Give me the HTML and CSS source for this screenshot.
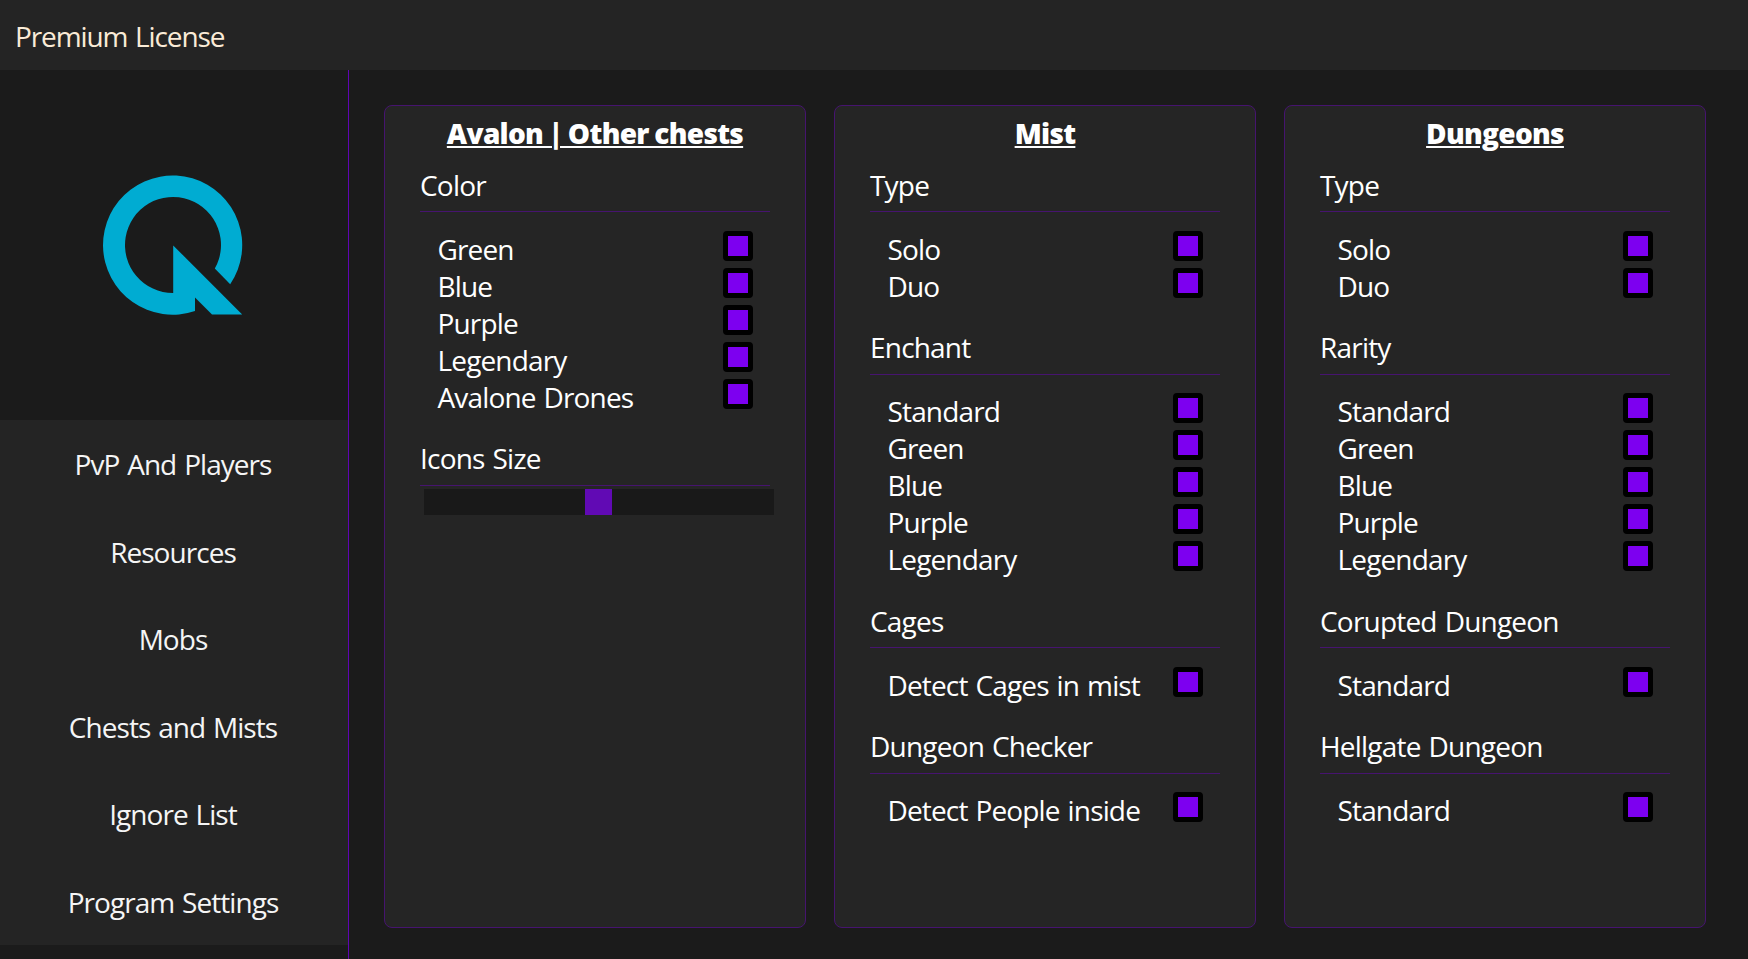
FILE: index.html
```html
<!DOCTYPE html>
<html lang="en">
<head>
    <meta charset="UTF-8">
    <meta name="viewport" content="width=device-width, initial-scale=1.0">
    <title>Chests and Mists</title>
    <link rel="stylesheet" href="styles.css">
</head>
<body>
    <header class="header">Premium License</header>

    <div class="container">
        <aside class="sidebar">
            <div class="logo">
                <svg width="140" height="140" viewBox="0 0 140 140">
                    <path fill="#00acd2" d="M70.2 70.4 L139.2 139.6 H109 L92 122.5 V136 A69.6 69.6 0 1 1 127.2 109.2 L111.8 93.6 A48 48 0 1 0 70.2 118 Z"/>
                </svg>
            </div>
            <nav class="menu">
                <a class="menu-item">PvP And Players</a>
                <a class="menu-item">Resources</a>
                <a class="menu-item">Mobs</a>
                <a class="menu-item">Chests and Mists</a>
                <a class="menu-item">Ignore List</a>
                <a class="menu-item">Program Settings</a>
            </nav>
        </aside>

        <main class="content">
            <div class="card">
                <h2 class="card-title">Avalon | Other chests</h2>
                <section class="group">
                    <h3 class="group-title">Color</h3>
                    <label class="option">Green<input type="checkbox" class="check" checked></label>
                    <label class="option">Blue<input type="checkbox" class="check" checked></label>
                    <label class="option">Purple<input type="checkbox" class="check" checked></label>
                    <label class="option">Legendary<input type="checkbox" class="check" checked></label>
                    <label class="option">Avalone Drones<input type="checkbox" class="check" checked></label>
                </section>
                <section class="group group-slider">
                    <h3 class="group-title">Icons Size</h3>
                    <input type="range" class="slider" min="0" max="1000" value="498">
                </section>
            </div>

            <div class="card">
                <h2 class="card-title">Mist</h2>
                <section class="group">
                    <h3 class="group-title">Type</h3>
                    <label class="option">Solo<input type="checkbox" class="check" checked></label>
                    <label class="option">Duo<input type="checkbox" class="check" checked></label>
                </section>
                <section class="group">
                    <h3 class="group-title">Enchant</h3>
                    <label class="option">Standard<input type="checkbox" class="check" checked></label>
                    <label class="option">Green<input type="checkbox" class="check" checked></label>
                    <label class="option">Blue<input type="checkbox" class="check" checked></label>
                    <label class="option">Purple<input type="checkbox" class="check" checked></label>
                    <label class="option">Legendary<input type="checkbox" class="check" checked></label>
                </section>
                <section class="group">
                    <h3 class="group-title">Cages</h3>
                    <label class="option">Detect Cages in mist<input type="checkbox" class="check" checked></label>
                </section>
                <section class="group">
                    <h3 class="group-title">Dungeon Checker</h3>
                    <label class="option">Detect People inside<input type="checkbox" class="check" checked></label>
                </section>
            </div>

            <div class="card">
                <h2 class="card-title">Dungeons</h2>
                <section class="group">
                    <h3 class="group-title">Type</h3>
                    <label class="option">Solo<input type="checkbox" class="check" checked></label>
                    <label class="option">Duo<input type="checkbox" class="check" checked></label>
                </section>
                <section class="group">
                    <h3 class="group-title">Rarity</h3>
                    <label class="option">Standard<input type="checkbox" class="check" checked></label>
                    <label class="option">Green<input type="checkbox" class="check" checked></label>
                    <label class="option">Blue<input type="checkbox" class="check" checked></label>
                    <label class="option">Purple<input type="checkbox" class="check" checked></label>
                    <label class="option">Legendary<input type="checkbox" class="check" checked></label>
                </section>
                <section class="group">
                    <h3 class="group-title">Corupted Dungeon</h3>
                    <label class="option">Standard<input type="checkbox" class="check" checked></label>
                </section>
                <section class="group">
                    <h3 class="group-title">Hellgate Dungeon</h3>
                    <label class="option">Standard<input type="checkbox" class="check" checked></label>
                </section>
            </div>
        </main>
    </div>
</body>
</html>
```

FILE: styles.css
```css
* {
    box-sizing: border-box;
}

body {
    display: flex;
    flex-direction: column;
    height: 100vh;
    margin: 0;
    background-color: #1b1b1b;
    color: white;
    font-family: 'Segoe UI', 'Open Sans', sans-serif;
    font-size: 28px;
    line-height: 37px;
    letter-spacing: -0.85px;
    word-spacing: 1.5px;
    overflow: hidden;
}

.header {
    flex: none;
    height: 70px;
    padding: 18px 15px 0;
    background-color: #242424;
    color: antiquewhite;
    letter-spacing: -1.1px;
}

.container {
    display: flex;
    flex: 1;
    min-height: 0;
}

.sidebar {
    width: 349px;
    border-right: 1px solid #5f05b4;
}

.logo {
    display: flex;
    justify-content: center;
    align-items: center;
    height: 350px;
    padding-right: 2px;
}

.menu {
    display: flex;
    flex-direction: column;
    height: 525px;
    background-color: #242424;
}

.menu-item {
    display: flex;
    flex: 1;
    justify-content: center;
    align-items: center;
    padding: 2px 2px 0 0;
    color: whitesmoke;
    letter-spacing: -0.95px;
    cursor: pointer;
}

.content {
    display: flex;
    align-items: flex-start;
    gap: 28px;
    padding: 35px;
}

.card {
    width: 422px;
    height: 823px;
    padding: 9px 35px;
    background-color: #252525;
    border: 1px solid #46146f;
    border-radius: 8px;
}

.card-title {
    margin: 0 0 14.6px;
    font-size: 28px;
    font-weight: 800;
    text-align: center;
    text-decoration: underline;
    text-decoration-thickness: 2px;
    text-underline-offset: 2px;
    letter-spacing: -0.7px;
    word-spacing: -1px;
}

.group {
    padding-bottom: 24.45px;
}

.group-title {
    margin: 0 0 18.6px;
    padding-bottom: 7.5px;
    border-bottom: 1px solid #46146f;
    font-size: 28px;
    font-weight: normal;
    letter-spacing: -0.8px;
}

.option {
    display: flex;
    justify-content: space-between;
    height: 37px;
    padding: 0 17px 0 17.5px;
    line-height: 37px;
}

.check {
    appearance: none;
    width: 30px;
    height: 30px;
    margin: 0;
    background-color: #7d00f0;
    border: 5px solid black;
    border-radius: 4px;
}

.group-slider .group-title {
    margin-bottom: 3px;
}

.slider {
    appearance: none;
    display: block;
    width: 350px;
    height: 26px;
    margin: 0 0 0 4px;
    background-color: #191919;
}

.slider::-webkit-slider-thumb {
    appearance: none;
    width: 27px;
    height: 26px;
    background-color: #610ab4;
}
```
